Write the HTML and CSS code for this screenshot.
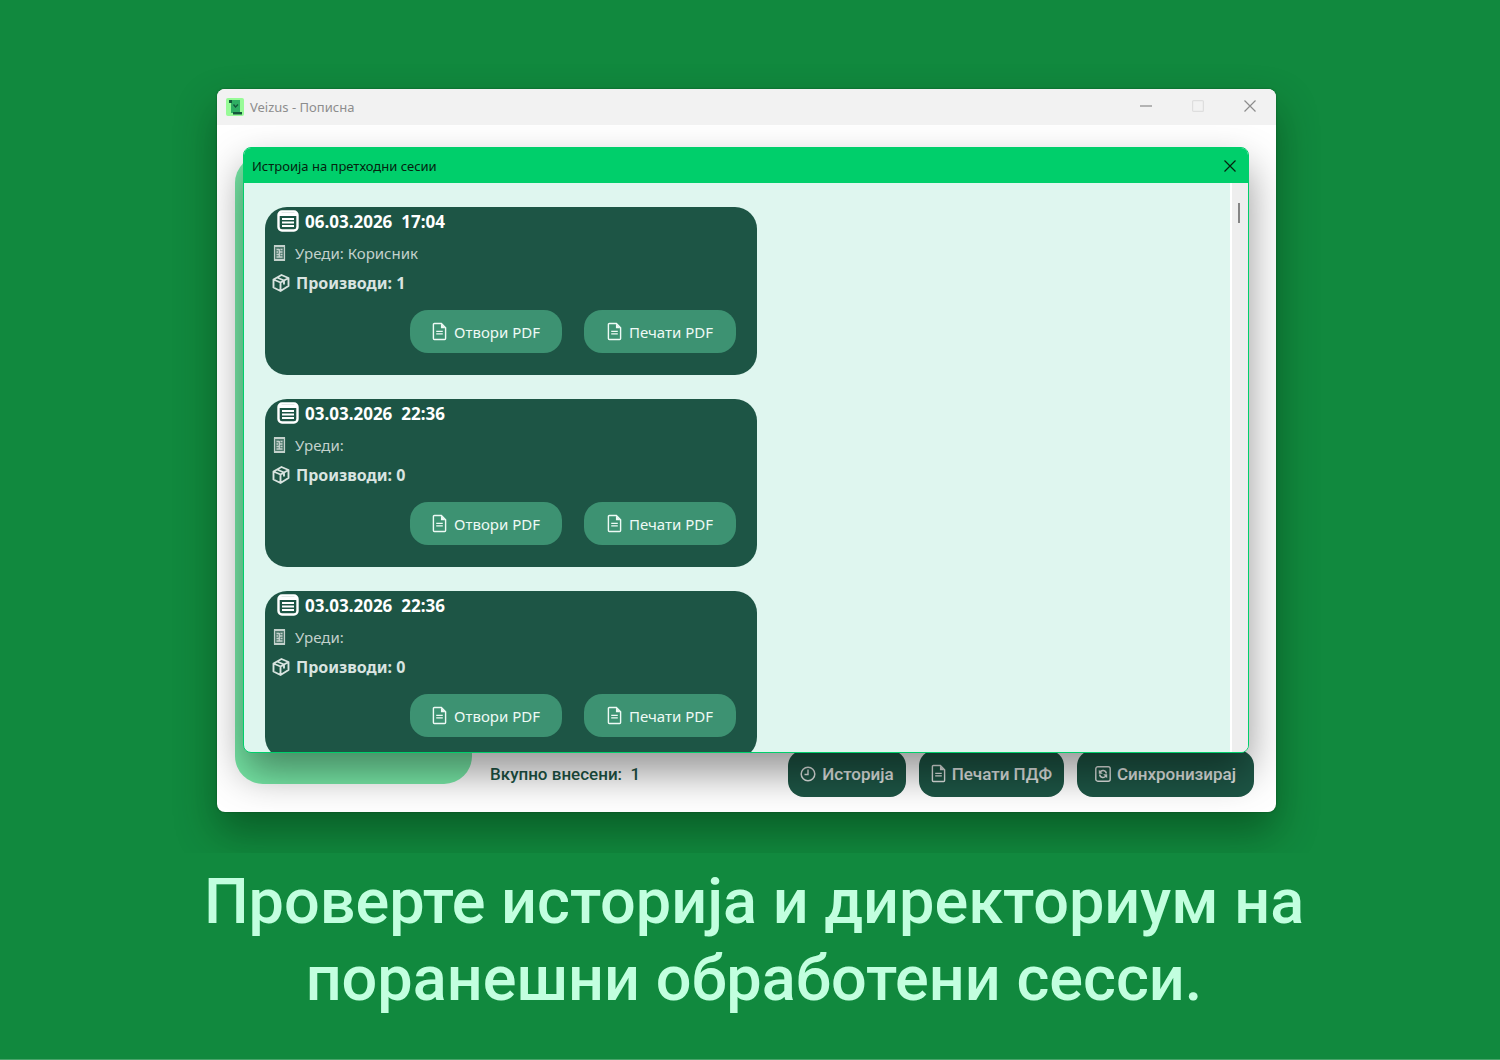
FILE: index.html
```html
<!DOCTYPE html>
<html lang="mk">
<head>
<meta charset="utf-8">
<title>Veizus - Пописна</title>
<link rel="stylesheet" href="styles.css">
</head>
<body>
<svg class="sprite" aria-hidden="true">
  <symbol id="i-list" viewBox="0 0 22 22"><rect x="1.500" y="1.500" width="19" height="19" rx="3.500" fill="none" stroke="currentColor" stroke-width="2.400"/><path d="M2 2.500h18v3.500H2z" fill="currentColor"/><path d="M5 9h12M5 12.500h12M5 16h12" stroke="currentColor" stroke-width="2.200"/></symbol>
  <symbol id="i-device" viewBox="0 0 12 18"><path d="M1 2h10v14H1z" fill="currentColor" fill-opacity=".3" stroke="currentColor" stroke-width="1.200"/><path d="M.5 2h11M.5 16h11" stroke="currentColor" stroke-width="2"/><path d="M3 5.500h2.500M7 5.500h2M3 8h1.500M6 8h3M3 10.500h2.500M7 10.500h2M3 13h6M5.800 5v8" stroke="currentColor" stroke-width="1.300"/></symbol>
  <symbol id="i-box" viewBox="0 0 18 18"><path d="M9.500 1 16.500 4v8L8.500 17 1.500 13.500V5.500z M1.500 5.500 8.500 8.500l8-4.500M8.500 8.500V17M5 3.500l7 3v4" fill="none" stroke="currentColor" stroke-width="1.900" stroke-linejoin="round"/></symbol>
  <symbol id="i-doc" viewBox="0 0 16 20"><path d="M1.500 2.500a1 1 0 0 1 1-1h7.500l4.500 4.500v11.500a1 1 0 0 1-1 1h-11a1 1 0 0 1-1-1z" fill="none" stroke="currentColor" stroke-width="1.500"/><path d="M9.500 1.500v5h5z" fill="currentColor"/><path d="M4.500 9.800h7M4.500 12.500h7" stroke="currentColor" stroke-width="1.300"/></symbol>
  <symbol id="i-clock" viewBox="0 0 16 16"><circle cx="8" cy="8" r="6.800" fill="none" stroke="currentColor" stroke-width="1.500"/><path d="M8 3.500V8.500H4.500" fill="none" stroke="currentColor" stroke-width="1.400"/></symbol>
  <symbol id="i-sync" viewBox="0 0 16 16"><rect x=".8" y=".8" width="14.400" height="14.400" rx="2" fill="none" stroke="currentColor" stroke-width="1.400"/><path d="M5 6.500A3.300 3.300 0 0 1 11.300 7.500M11 9.500A3.300 3.300 0 0 1 4.700 8.500" fill="none" stroke="currentColor" stroke-width="1.600"/><path d="M3.800 3.800v4h4zM12.200 12.200v-4h-4z" fill="currentColor"/></symbol>
  <symbol id="i-close" viewBox="0 0 12 12"><path d="M.5.5l11 11M11.500.5l-11 11" stroke="currentColor" stroke-width="1.200"/></symbol>
</svg>

<section class="stage">
  <div class="window">
    <header class="titlebar">
      <svg class="logo" viewBox="0 0 18 18"><rect width="18" height="18" rx="2" fill="#98fb98"/><path d="M5 2h9v13H5z" fill="#2fae63"/><path d="M3 2h3v3H3zM7 14h9v2.500H7z" fill="#14573c"/><path d="M7.500 6.500 9.500 9l2.500-2.500M9.500 8v2" fill="none" stroke="#14573c" stroke-width="1.300"/></svg>
      <span class="app-name">Veizus - Пописна</span>
      <button class="win-btn" aria-label="Минимизирај"><svg viewBox="0 0 12 12"><path d="M0 6h12" stroke="#888" stroke-width="1.200"/></svg></button>
      <button class="win-btn" aria-label="Максимизирај" disabled><svg viewBox="0 0 12 12"><rect x=".6" y=".6" width="10.800" height="10.800" rx="1" fill="none" stroke="#dedede" stroke-width="1.200"/></svg></button>
      <button class="win-btn" aria-label="Затвори"><svg><use href="#i-close"/></svg></button>
    </header>

    <main class="workspace">
      <aside class="side"></aside>
      <div class="bottom-bar">
        <p class="total">Вкупно внесени:&nbsp; 1</p>
        <button class="action"><svg class="ic16"><use href="#i-clock"/></svg>Историја</button>
        <button class="action"><svg class="ic-doc"><use href="#i-doc"/></svg>Печати ПДФ</button>
        <button class="action wide"><svg class="ic16"><use href="#i-sync"/></svg>Синхронизирај</button>
      </div>

      <div class="dialog" role="dialog" aria-labelledby="dlg-title">
        <header class="dialog-head">
          <h2 id="dlg-title">Истроија на претходни сесии</h2>
          <button class="dialog-close" aria-label="Затвори"><svg><use href="#i-close"/></svg></button>
        </header>
        <div class="dialog-body">
          <div class="sessions">
            <article class="card">
              <h3><svg class="ic-list"><use href="#i-list"/></svg>06.03.2026&nbsp; 17:04</h3>
              <p class="device"><svg><use href="#i-device"/></svg>Уреди: Корисник</p>
              <p class="products"><svg><use href="#i-box"/></svg>Производи: 1</p>
              <div class="card-actions">
                <button class="pdf"><svg class="ic-doc"><use href="#i-doc"/></svg>Отвори PDF</button>
                <button class="pdf"><svg class="ic-doc"><use href="#i-doc"/></svg>Печати PDF</button>
              </div>
            </article>
            <article class="card">
              <h3><svg class="ic-list"><use href="#i-list"/></svg>03.03.2026&nbsp; 22:36</h3>
              <p class="device"><svg><use href="#i-device"/></svg>Уреди:</p>
              <p class="products"><svg><use href="#i-box"/></svg>Производи: 0</p>
              <div class="card-actions">
                <button class="pdf"><svg class="ic-doc"><use href="#i-doc"/></svg>Отвори PDF</button>
                <button class="pdf"><svg class="ic-doc"><use href="#i-doc"/></svg>Печати PDF</button>
              </div>
            </article>
            <article class="card">
              <h3><svg class="ic-list"><use href="#i-list"/></svg>03.03.2026&nbsp; 22:36</h3>
              <p class="device"><svg><use href="#i-device"/></svg>Уреди:</p>
              <p class="products"><svg><use href="#i-box"/></svg>Производи: 0</p>
              <div class="card-actions">
                <button class="pdf"><svg class="ic-doc"><use href="#i-doc"/></svg>Отвори PDF</button>
                <button class="pdf"><svg class="ic-doc"><use href="#i-doc"/></svg>Печати PDF</button>
              </div>
            </article>
          </div>
          <div class="scrollbar"><div class="thumb"></div></div>
        </div>
      </div>
    </main>
  </div>
</section>

<h1 class="caption">Проверте историја и директориум на<br>поранешни обработени сесси.</h1>
</body>
</html>
```
FILE: styles.css
```css
* { box-sizing: border-box; }

body {
  margin: 0;
  min-height: 100vh;
  background: #11893e;
  border-bottom: 1px solid #4aa36a;
  font-family: "Noto Sans", "Open Sans", sans-serif;
}

h1, h2, h3, p { margin: 0; }

button {
  border: 0;
  padding: 0;
  background: none;
  font: inherit;
  color: inherit;
}

svg { flex: none; }
.sprite { position: absolute; width: 0; height: 0; }
.ic16 { width: 16px; height: 16px; }
.ic-doc { width: 15px; height: 19px; }
.ic-list { width: 22px; height: 22px; }

.stage {
  padding: 89px 224px 41px 217px;
  overflow: hidden;
}

.window {
  border-radius: 8px;
  background: #fff;
  box-shadow: 0 20px 40px rgba(0, 40, 10, .45), 0 0 2px rgba(0, 40, 10, .5);
}

.titlebar {
  display: flex;
  align-items: center;
  height: 36px;
  padding: 0 0 0 9px;
  border-radius: 8px 8px 0 0;
  background: #f2f2f2;
  color: #8d8d8d;
  font-size: 13px;
}
.logo { width: 18px; height: 18px; }
.app-name { flex: 1; margin-left: 6px; }
.win-btn {
  display: grid;
  place-items: center;
  align-self: flex-start;
  width: 52px;
  height: 34px;
}
.win-btn svg, .dialog-close svg { width: 12px; height: 12px; }

.workspace {
  position: relative;
  display: flex;
  align-items: flex-end;
  gap: 18px;
  height: 687px;
  padding: 30px 22px 15px 18px;
  border-radius: 0 0 8px 8px;
  overflow: hidden;
}
.side {
  align-self: stretch;
  width: 237px;
  margin-bottom: 13px;
  border-radius: 28px;
  background: #78eaa8;
}
.bottom-bar {
  flex: 1;
  display: flex;
  align-items: center;
  gap: 13px;
  font-family: Roboto, sans-serif;
  font-weight: 500;
  font-size: 17px;
}
.total { flex: 1; color: #1d5545; }
.action {
  display: flex;
  align-items: center;
  justify-content: center;
  gap: 6px;
  height: 47px;
  padding: 0 12px;
  border-radius: 16px;
  background: #1d5545;
  color: #e0e4e2;
}
.action.wide { padding: 0 18px; }

.dialog {
  position: absolute;
  top: 22px;
  right: 27px;
  bottom: 59px;
  left: 26px;
  display: flex;
  flex-direction: column;
  border: 1px solid #00cf6b;
  border-radius: 8px;
  background: #dff6ef;
  box-shadow: 0 20px 40px rgba(0, 0, 0, .42);
  overflow: hidden;
}
.dialog-head {
  display: flex;
  align-items: center;
  justify-content: space-between;
  height: 35px;
  padding: 0 12px 0 8px;
  background: #00cf6b;
}
.dialog-head h2 { font-size: 13px; font-weight: 400; color: #05230f; }
.dialog-close { display: grid; color: #05230f; }
.dialog-body {
  flex: 1;
  display: flex;
  min-height: 0;
}
.sessions {
  flex: 1;
  display: flex;
  flex-direction: column;
  gap: 24px;
  padding: 24px 21px;
  overflow: hidden;
}
.scrollbar {
  width: 18px;
  padding: 20px 6px;
  border-left: 2px solid #fff;
  background: #eee;
}
.thumb { width: 2px; height: 20px; background: #858585; }

.card {
  flex: none;
  width: 492px;
  height: 168px;
  border-radius: 22px;
  background: #1d5545;
  color: #d9e4e0;
}
.card h3, .card p { display: flex; align-items: center; }
.card h3 {
  height: 28px;
  padding-left: 12px;
  gap: 6px;
  font-size: 17px;
  color: #fff;
}
.card p { padding-left: 7px; font-size: 15px; }
.card .device { height: 36px; gap: 9px; padding-left: 8px; color: #c3d1cc; }
.card .products { height: 24px; gap: 6px; font-size: 16px; font-weight: 700; }
.device svg { width: 13px; height: 18px; }
.products svg { width: 18px; height: 18px; }
.card-actions {
  display: flex;
  justify-content: flex-end;
  gap: 22px;
  padding: 15px 21px 0 0;
}
.pdf {
  display: flex;
  align-items: center;
  justify-content: center;
  gap: 7px;
  width: 152px;
  height: 43px;
  border-radius: 18px;
  background: #3d9272;
  color: #eefaf5;
  font-size: 15px;
}

.caption {
  padding: 10px 0 0 8px;
  font-family: Roboto, sans-serif;
  font-size: 63px;
  font-weight: 500;
  line-height: 77px;
  text-align: center;
  color: #c2ffdf;
}
```
